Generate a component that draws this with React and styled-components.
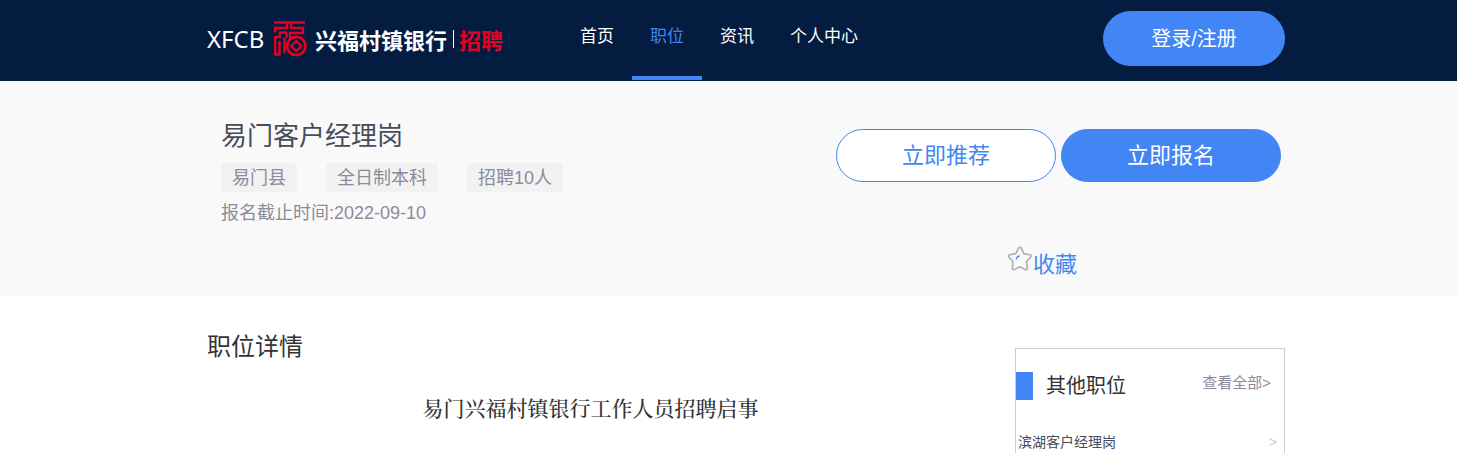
import React from "react";
import styled, { createGlobalStyle, css } from "styled-components";

const blue = "#4285f4";

const GlobalStyle = createGlobalStyle`
  *, *::before, *::after { box-sizing: border-box; }
  body {
    margin: 0;
    background: #fff;
    font-family: "Liberation Sans", "Noto Sans CJK SC", sans-serif;
  }
  h1, h2, h3, p, ul { margin: 0; padding: 0; font-weight: 400; }
  ul { list-style: none; }
  a { color: inherit; text-decoration: none; }
  button { font-family: inherit; cursor: pointer; }
`;

const Page = styled.div`
  display: flex;
  flex-direction: column;
  min-height: 100vh;
`;

const Container = styled.div`
  display: flex;
  width: 100%;
  max-width: 1113px;
  margin: 0 auto;
`;

const Header = styled.header`
  background: #031c40;
`;

const HeaderInner = styled(Container)`
  height: 81px;
  padding-left: 35px;
`;

const Brand = styled.a`
  display: flex;
  align-items: center;
  width: 355px;
  height: 78px;
  color: #fff;
  font: 700 22px/32px "Noto Sans CJK SC", sans-serif;
  white-space: nowrap;
`;

const BrandLatin = styled.span`
  width: 67px;
  font: 400 24px/32px "Noto Sans", sans-serif;
`;

const BrandName = styled.span`
  margin-left: 8px;
`;

const BrandSection = styled.span`
  display: flex;
  align-items: center;
  gap: 5px;
  margin-left: 6px;
  color: #e60024;

  &::before {
    content: "";
    width: 1px;
    height: 18px;
    background: #fff;
  }
`;

const Nav = styled.nav`
  display: flex;
`;

const NavLink = styled.a`
  height: 80px;
  padding: 25px 18px 0;
  border-bottom: 4px solid transparent;
  color: #fff;
  font-size: 17px;
  line-height: 24px;
  white-space: nowrap;
  ${(p) => p.$active && css`
    color: ${blue};
    border-color: ${blue};
  `}
`;

const PillButton = styled.button`
  width: ${(p) => (p.$compact ? 182 : 220)}px;
  height: ${(p) => (p.$compact ? 55 : 53)}px;
  padding: 0;
  border: 1px solid ${blue};
  border-radius: 28px;
  background: ${(p) => (p.$outline ? "#fff" : blue)};
  color: ${(p) => (p.$outline ? blue : "#fff")};
  font-size: ${(p) => (p.$compact ? 20 : 22)}px;
  line-height: 32px;
`;

const LoginSlot = styled.div`
  margin-left: auto;
  padding-top: 11px;
`;

const Hero = styled.section`
  background: #f9f9f9;
`;

const HeroInner = styled(Container)`
  justify-content: space-between;
  min-height: 215px;
  padding: 34px 4px 12px 49px;
`;

const JobTitle = styled.h1`
  padding-top: 1px;
  color: #464c5b;
  font-size: 26px;
  line-height: 40px;
`;

const Tags = styled.ul`
  display: flex;
  gap: 29px;
  margin-top: 7px;
`;

const Tag = styled.li`
  padding: 1px 11px 0;
  border-radius: 4px;
  background: #f2f2f2;
  color: #8b8b9b;
  font-size: 18px;
  line-height: 28px;
`;

const Deadline = styled.p`
  margin-top: 6px;
  color: #8b8b9b;
  font-size: 18px;
  line-height: 30px;
`;

const Actions = styled.div`
  padding-top: 14px;
`;

const ActionRow = styled.div`
  display: flex;
  gap: 5px;
`;

const Favorite = styled.button`
  display: flex;
  align-items: center;
  margin: 64px 0 0 171px;
  padding: 0;
  border: 0;
  background: none;
  color: ${blue};
  font-size: 22px;
  line-height: 36px;

  svg { margin-bottom: 12px; }
`;

const Body = styled(Container)`
  flex: 1;
  gap: 41px;
  padding-left: 35px;
`;

const Details = styled.main`
  flex: 1;
  padding-top: 33px;
`;

const SectionTitle = styled.h2`
  color: #333;
  font-size: 24px;
  line-height: 36px;
`;

const NoticeTitle = styled.h3`
  margin-top: 26px;
  color: #333;
  font: 500 21px/32px "Noto Serif CJK SC", "Noto Sans CJK SC", serif;
  text-align: center;
`;

const Sidebar = styled.aside`
  width: 270px;
  margin-top: 52px;
  border: 1px solid #ccc;
  border-bottom: 0;
`;

const SidebarHead = styled.div`
  display: flex;
  align-items: center;
  padding: 23px 13px 0 0;

  &::before {
    content: "";
    width: 17px;
    height: 28px;
    background: ${blue};
  }
`;

const SidebarTitle = styled.h2`
  margin-left: 13px;
  color: #333;
  font-size: 20px;
  line-height: 28px;
`;

const MoreLink = styled.a`
  margin: 0 0 6px auto;
  color: #8b8b9b;
  font-size: 15px;
  line-height: 22px;
`;

const JobLink = styled.a`
  display: flex;
  justify-content: space-between;
  margin-top: 32px;
  padding: 0 7px 0 2px;
  color: #464c5b;
  font-size: 14px;
  line-height: 20px;
`;

const Arrow = styled.span`
  color: #ccc;
`;

const Emblem = () => (
  <svg width="33" height="36" viewBox="0 0 33 36" fill="none" stroke="#e60024" strokeWidth="2.4" aria-hidden="true">
    <path d="M0 1.500H31" />
    <path d="M13 1.500V7H1.200V11.500" />
    <path d="M17 1.500V7H29V12H16V18" />
    <path d="M12.500 11.500H6V16H1.200V33.500H5.500V20" />
    <path d="M12.500 11.500V17M10.500 17V32" />
    <circle cx="22.300" cy="25" r="9.200" strokeWidth="2.700" />
    <path d="M22.300 20L27.300 25L22.300 30L17.300 25Z" />
  </svg>
);

const Star = () => (
  <svg width="26" height="26" viewBox="0 0 26 26" fill="none" strokeLinejoin="round" strokeLinecap="round" aria-hidden="true">
    <path
      d="M11.500 2.200Q13 .2 14.300 2.200L16.800 7.600L22.700 8.700Q25.100 9.400 23.500 11.200L19.500 15.500L20.300 21.800Q20.300 24.300 18 23.400L12.800 20.800L7.600 23.400Q5.200 24.300 5.300 21.800L6 15.500L2 11.200Q.5 9.300 2.800 8.700L8.800 7.600Z"
      stroke="#adadb5"
      strokeWidth="1.600"
    />
    <path d="M9.300 13Q9.600 10.500 12.200 10" stroke={blue} strokeWidth="1.300" />
  </svg>
);

const navItems = ["首页", "职位", "资讯", "个人中心"];
const tags = ["易门县", "全日制本科", "招聘10人"];

export default function App() {
  return (
    <Page>
      <GlobalStyle />
      <Header>
        <HeaderInner>
          <Brand href="#">
            <BrandLatin>XFCB</BrandLatin>
            <Emblem />
            <BrandName>兴福村镇银行</BrandName>
            <BrandSection>招聘</BrandSection>
          </Brand>
          <Nav>
            {navItems.map((item) => (
              <NavLink key={item} href="#" $active={item === "职位"}>{item}</NavLink>
            ))}
          </Nav>
          <LoginSlot>
            <PillButton $compact>登录/注册</PillButton>
          </LoginSlot>
        </HeaderInner>
      </Header>

      <Hero>
        <HeroInner>
          <div>
            <JobTitle>易门客户经理岗</JobTitle>
            <Tags>
              {tags.map((tag) => <Tag key={tag}>{tag}</Tag>)}
            </Tags>
            <Deadline>报名截止时间:2022-09-10</Deadline>
          </div>
          <Actions>
            <ActionRow>
              <PillButton $outline>立即推荐</PillButton>
              <PillButton>立即报名</PillButton>
            </ActionRow>
            <Favorite><Star />收藏</Favorite>
          </Actions>
        </HeroInner>
      </Hero>

      <Body>
        <Details>
          <SectionTitle>职位详情</SectionTitle>
          <NoticeTitle>易门兴福村镇银行工作人员招聘启事</NoticeTitle>
        </Details>
        <Sidebar>
          <SidebarHead>
            <SidebarTitle>其他职位</SidebarTitle>
            <MoreLink href="#">查看全部&gt;</MoreLink>
          </SidebarHead>
          <JobLink href="#">
            滨湖客户经理岗
            <Arrow>&gt;</Arrow>
          </JobLink>
        </Sidebar>
      </Body>
    </Page>
  );
}
